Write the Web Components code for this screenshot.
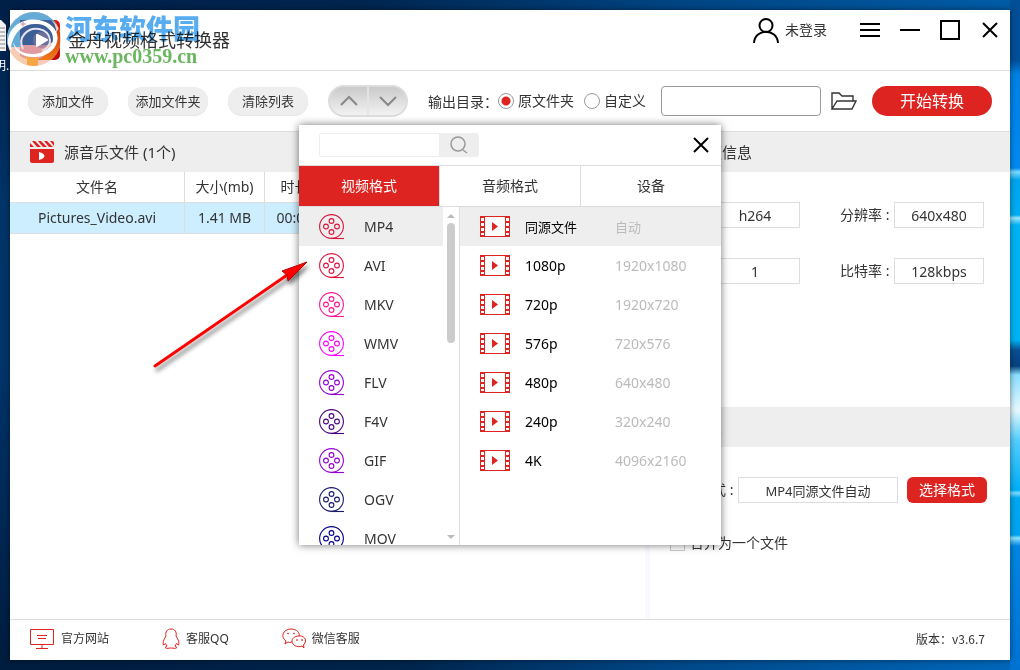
<!DOCTYPE html>
<html lang="zh-CN">
<head>
<meta charset="utf-8">
<title>金舟视频格式转换器</title>
<style>
html, body { margin: 0; height: 100%; }
body { font: 14px/20px "Noto Sans", "Noto Sans CJK SC", sans-serif; color: #333; overflow: hidden; }
</style>
</head>
<body>
<desk-top>
  <app-window>
    <title-bar heading="金舟视频格式转换器"></title-bar>
    <tool-bar></tool-bar>
    <file-list></file-list>
    <info-panel></info-panel>
    <app-footer></app-footer>
    <format-picker slot="popup"></format-picker>
  </app-window>
</desk-top>
<script>
const base = `<style>
:host,*{box-sizing:border-box}
button,input{font:inherit;color:inherit;margin:0;padding:0}
button{border:0;background:none;cursor:pointer}
a{color:inherit;text-decoration:none}
svg{display:block;flex:none}
</style>`;

function define(name, render) {
  customElements.define(name, class extends HTMLElement {
    connectedCallback() {
      if (this.shadowRoot) return;
      this.attachShadow({ mode: "open" }).innerHTML = base + render(this);
    }
  });
}

/* Desktop wallpaper, shortcut icon at the edge, and overlays above the window */
define("desk-top", () => `
<style>
:host{display:flex;position:relative;min-height:100%;padding:10px;overflow:hidden;
 background:
 linear-gradient(#004f97 0,#004f97 60px,#0081e5 74px,#008af0 168px,#7ddcff 172px,#00a5ee 180px,#00aef5 215px,#9be6ff 218px,#00b4f5 225px,#00b4f5 340px,#0a4f92 350px,#06417f 366px,#8bdfff 375px,#e6f9ff 410px,#55cfff 440px,#00aef7 490px,#7ddcff 493px,#00a8f2 498px,#00a4ef 535px,#8be4ff 538px,#0086e4 546px,#0072d2 100%) right/10px 100% no-repeat,
 linear-gradient(90deg,#012049,#00254f 35%,#004482 65%,#005da8) top/100% 10px no-repeat,
 linear-gradient(90deg,#001c3e,#00254d 40%,#004787 65%,#0068bd) bottom/100% 10px no-repeat,
 linear-gradient(#012049,#013468 30%,#00346a 55%,#001c3e) left/10px 100% no-repeat}
.shortcut{position:absolute;left:-6px;top:20px;color:#fff;font-size:12px;white-space:nowrap}
.shortcut svg{margin-left:6px}
.mark{position:absolute;left:65px;top:12px;pointer-events:none;mix-blend-mode:multiply}
.mark b{display:block}
.cn{font:900 27px/32px "Noto Sans CJK SC",sans-serif;color:#58adf0}
.url{font:bold 20px/24px "Liberation Serif",serif;color:#6bb75f}
.logo{position:absolute;left:7px;top:11px}
.arrow{position:absolute;left:140px;top:250px;pointer-events:none;filter:drop-shadow(2px 4px 2px rgba(0,0,0,.5))}
</style>
<div class="shortcut"><svg width="10" height="36" viewBox="0 0 10 36"><path d="M0 0V31H6V5L1 0Z" fill="#f4f4f4"/><path d="M0 8H5M0 12H5M0 16H5M0 20H5M0 24H5M0 28H5" stroke="#888"/></svg>明.</div>
<slot></slot>
<svg class="logo" width="54" height="56" viewBox="0 0 54 56">
 <defs><linearGradient id="o" x1="0" y1="0" x2="1" y2="1"><stop offset="0" stop-color="#ef4a25"/><stop offset=".5" stop-color="#d81a10"/><stop offset="1" stop-color="#b80707"/></linearGradient>
 <linearGradient id="g" x1="0" y1="0" x2="0" y2="1"><stop offset="0" stop-color="#c8380a"/><stop offset="1" stop-color="#f07818"/></linearGradient>
 <clipPath id="c"><circle cx="27" cy="28" r="27"/></clipPath></defs>
 <rect x="13" y="9" width="40" height="40" rx="5" fill="url(#o)"/>
 <g clip-path="url(#c)">
 <path d="M0 0H54V56H0Z" fill="#f6c9bd"/>
 <path d="M0 0H50V14Q46 9 36 9H13V36H0Z" fill="#66abd6"/>
 <path d="M13 9H44Q52 16 48 30L40 34H13Z" fill="#3c5f97"/>
 <path d="M13 34H44V49H13Z" fill="#e19aa0"/>
 <path d="M53 15V42L43 49H30Q46 42 48 24Z" fill="url(#g)"/>
 <path d="M18 45Q26 48 31 46V56H20Z" fill="#f8a645"/>
 <path d="M0 40L8 39Q13 47 20 48V56H0Z" fill="#f7cdb0"/>
 </g>
 <path d="M1 34C-1 15 18 6 32 9C44 11 53 20 50 31C48 40 37 47 26 46C14 46 7 39 6 31C9 39 16 43 25 43C38 43 46 35 46 28C46 19 38 13 30 13C18 12 9 20 6 29Q3 35 5 41Z" fill="#fff"/>
 <path d="M16 38C10 26 21 16 32 18Q42 20 43 29Q43 37 35 40" fill="none" stroke="#e8e4ee" stroke-width="2"/>
 <circle cx="34" cy="29" r="8" fill="#8a7a9e" opacity=".6"/>
 <path d="M30 24L40 29L30 35Z" fill="#fff" stroke="#fff" stroke-width="2" stroke-linejoin="round"/>
 <path d="M16 10l1 2 3 1-3 1-1 2-1-2-2-1 2-1Z" fill="#d6a9b9"/>
</svg>
<div class="mark"><b class="cn">河东软件园</b><b class="url">www.pc0359.cn</b></div>
<svg class="arrow" width="175" height="125" viewBox="0 0 175 125"><path d="M15 116L150 23" stroke="#f00" stroke-width="3" stroke-linecap="round"/><path d="M167 12L142 21L147 25L148 31Z" fill="#f00" stroke="#b00" stroke-width="1"/></svg>`);

define("app-window", () => `
<style>
:host{flex:1;display:grid;position:relative;grid-template:auto auto 1fr auto / 1fr 365px;background:#fff;box-shadow:0 0 6px rgba(0,0,0,.5)}
::slotted(title-bar),::slotted(tool-bar),::slotted(app-footer){grid-column:1/3}
</style><slot></slot><slot name="popup"></slot>`);

define("title-bar", el => `
<style>
:host{display:flex;align-items:center;height:61px;border-bottom:1px solid #ddd;padding:0 9px 0 58px}
h1{font-size:18px;line-height:28px;font-weight:400;margin:0;flex:1}
.user{display:flex;align-items:center;gap:6px;margin:0 32px 20px 0}
.ctl{display:flex;gap:18px;margin-bottom:20px}
</style>
<h1>${el.getAttribute("heading")}</h1>
<button class="user"><svg width="26" height="25" viewBox="0 0 26 25" fill="none" stroke="#000" stroke-width="2"><circle cx="13" cy="7.500" r="6.500"/><path d="M1 25C2 10 24 10 25 25"/></svg>未登录</button>
<div class="ctl">
<button aria-label="菜单"><svg width="22" height="20" fill="none" stroke="#000" stroke-width="2"><path d="M1 4H21M1 10H21M1 16H21"/></svg></button>
<button aria-label="最小化"><svg width="22" height="20" stroke="#000" stroke-width="2"><path d="M1 10H21"/></svg></button>
<button aria-label="最大化"><svg width="22" height="20" fill="none" stroke="#000" stroke-width="2"><path d="M2 1H20V19H2Z"/></svg></button>
<button aria-label="关闭"><svg width="22" height="20" fill="none" stroke="#000" stroke-width="2"><path d="M4 3L18 17M18 3L4 17"/></svg></button>
</div>`);

define("tool-bar", () => `
<style>
:host{display:flex;align-items:center;height:61px;border-bottom:1px solid #ddd;padding:0 18px;white-space:nowrap}
.pill{width:80px;height:28px;border-radius:14px;background:#eee;font-size:13px;margin-right:20px;box-shadow:0 1px 1px #e4e4e4}
.move{display:flex;width:80px;height:32px;border:2px solid #ddd;border-radius:16px;background:linear-gradient(#cacaca,#f2f2f2);margin-right:20px}
.move button{flex:1;display:grid;place-items:center}
.move button+button{border-left:2px solid #e4e4e4}
.cap{font-family:"Noto Sans CJK TC",sans-serif}
label{display:flex;align-items:center;gap:4px;margin-right:10px}
input[type=radio]{appearance:none;width:16px;height:16px;border:1px solid #999;border-radius:50%;background:#fff}
input:checked{background:radial-gradient(#dd2420 0 4px,#fff 5px)!important}
.path{flex:1;min-width:80px;height:30px;border:1px solid #999;border-radius:4px;background:#fff;margin:0 10px 0 5px}
.go{width:120px;height:30px;border-radius:15px;background:#dd2420;color:#fff;font-size:16px;margin-left:15px}
</style>
<button class="pill">添加文件</button><button class="pill">添加文件夹</button><button class="pill">清除列表</button>
<div class="move"><button aria-label="上移"><svg width="18" height="12" fill="none" stroke="#888" stroke-width="2"><path d="M1 10L9 2L17 10"/></svg></button><button aria-label="下移"><svg width="18" height="12" fill="none" stroke="#888" stroke-width="2"><path d="M1 2L9 10L17 2"/></svg></button></div>
<span class="cap">输出目录：</span>
<label><input type="radio" name="dir" checked>原文件夹</label>
<label><input type="radio" name="dir">自定义</label>
<input class="path" type="text" aria-label="输出目录">
<button aria-label="浏览"><svg width="26" height="18" viewBox="0 0 26 18" fill="none" stroke="#333" stroke-width="1.400"><path d="M1 17V1H8L11 4H22V9M1 17L6 9H25L21 17Z"/></svg></button>
<button class="go">开始转换</button>`);

define("section-head", () => `
<style>:host{display:flex;align-items:center;height:40px;background:#eee;padding-left:20px;gap:var(--gap,10px)}
:host([inset]){padding-left:10px;--gap:8px}
h2{margin:0;font-size:15px;line-height:20px;font-weight:400}</style>
<svg width="24" height="22" viewBox="0 0 24 22"><path d="M0 8H24V20Q24 22 22 22H2Q0 22 0 20Z" fill="#dd2420"/><path d="M0 6V2L4 6ZM2 0H5L11 6H7ZM8 0H11L17 6H13ZM14 0H17L23 6H19ZM20 0H22Q24 0 24 2V5Z" fill="#dd2420"/><path d="M9 11L12 12Q17 15 12 18L9 19Z" fill="#fff"/></svg>
<h2><slot></slot></h2>`);

define("file-list", () => `
<style>
:host{display:block}
table{border-collapse:separate;border-spacing:0;table-layout:fixed;width:100%}
th,td{height:31px;padding:0;font-weight:400;text-align:center;border-bottom:1px solid #ddd;border-right:1px solid #ddd}
td{background:#cef}
th:last-child,td:last-child{border-right:0}
.name{width:175px}.size{width:80px}.time{width:60px}
</style>
<section-head>源音乐文件 (1个)</section-head>
<table><thead><tr><th class="name">文件名</th><th class="size">大小(mb)</th><th class="time">时长</th><th></th></tr></thead>
<tbody><tr><td>Pictures_Video.avi</td><td>1.41 MB</td><td>00:00</td><td></td></tr></tbody></table>`);

define("info-panel", () => `
<style>
:host{display:block;border-left:5px solid #f8faff}
.info{display:grid;gap:30px;padding:30px 26px 0 20px;height:235px;align-content:start}
.row{display:flex;justify-content:flex-end;align-items:center;gap:40px}
label{display:flex;align-items:center;white-space:nowrap}
span{width:54px}
label:first-child span{width:40px}
input[type=text]{width:90px;height:26px;border:1px solid #ddd;text-align:center;background:#fff}
.out{display:flex;align-items:center;padding:30px 23px 0 20px;gap:9px}
.out label{flex:1}
.out label span{width:68px}
.out input[type=text]{flex:1;min-width:0;font-size:13px}
button{width:80px;height:26px;border-radius:6px;background:#dd2420;color:#fff}
.merge{margin:30px 20px;gap:5px}
input[type=checkbox]{appearance:none;width:15px;height:15px;border:1px solid #ccc;background:#fff}
</style>
<section-head inset>视频信息</section-head>
<div class="info">
<div class="row"><label><span>编码:</span><input type="text" readonly value="h264"></label><label><span>分辨率 :</span><input type="text" readonly value="640x480"></label></div>
<div class="row"><label><span>声道:</span><input type="text" readonly value="1"></label><label><span>比特率 :</span><input type="text" readonly value="128kbps"></label></div>
</div>
<section-head inset>设置</section-head>
<div class="out"><label><span>输出格式 :</span><input type="text" readonly value="MP4同源文件自动"></label><button>选择格式</button></div>
<label class="merge"><input type="checkbox">合并为一个文件</label>`);

define("app-footer", () => `
<style>
:host{display:flex;align-items:center;height:41px;border-top:1px solid #ddd;padding:0 25px 3px 19px;font-size:12px}
a{display:flex;align-items:center;gap:6px;margin-right:53px}
svg{fill:none;stroke:#dd2420}
span{margin-left:auto;font-family:"Noto Sans CJK TC",sans-serif}
</style>
<a href="#site"><svg width="26" height="22" viewBox="0 0 26 22"><path d="M1.500 1.500H24.500V16.500H1.500ZM8 7.500H18M9 10.500H17M13 17V20M7 20.500H19"/></svg>官方网站</a>
<a href="#qq"><svg width="18" height="22" viewBox="0 0 18 22"><path d="M4 8C3 4 5 1 9 1S15 4 14 8Q18 14 16.500 17L14.500 15.500L13 18L15 19.500Q14 21 9.500 20H8.500Q4 21 3 19.500L5 18L3.500 15.500L1.500 17Q0 14 4 8Z"/></svg>客服QQ</a>
<a href="#wechat"><svg width="24" height="22" viewBox="0 0 24 22"><path d="M10 14Q7 15 6 14L3 16L4 13C-2 9 1 1 9 1C15 1 18 5 17 8M17 8C12 8 10 11 10 13C10 17 15 20 20 18L22 20L21.500 17C27 11 20 7 17 8Z"/><circle cx="6" cy="5.500" r=".5"/><circle cx="12" cy="5.500" r=".5"/><circle cx="15" cy="12" r=".5"/><circle cx="20" cy="12" r=".5"/></svg>微信客服</a>
<span>版本：v3.6.7</span>`);

const formats = [["MP4", "#dc143c"], ["AVI", "#dc143c"], ["MKV", "#ff1493"], ["WMV", "#ff00ff"], ["FLV", "#9400d3"], ["F4V", "#4b0082"], ["GIF", "#9400d3"], ["OGV", "#191970"], ["MOV", "#00008b"]];
const sizes = [["同源文件", "自动"], ["1080p", "1920x1080"], ["720p", "1920x720"], ["576p", "720x576"], ["480p", "640x480"], ["240p", "320x240"], ["4K", "4096x2160"]];

define("format-item", el => `
<style>:host{display:block}
button{display:flex;align-items:center;width:100%;height:39px;padding-left:20px;gap:20px;text-align:left}
:host([selected]) button{background:#eee}
svg{fill:none;stroke:${el.getAttribute("color")};stroke-width:1.100}</style>
<button><svg width="25" height="26" viewBox="0 0 25 26"><circle cx="12.500" cy="12.500" r="11.900"/><circle cx="12.500" cy="7" r="2.400"/><circle cx="7" cy="12.500" r="2.400"/><circle cx="18" cy="12.500" r="2.400"/><circle cx="12.500" cy="18" r="2.400"/><path d="M12 24.500H25"/></svg><slot></slot></button>`);

define("size-item", el => `
<style>:host{display:block}
button{display:flex;align-items:center;width:100%;height:39px;padding-left:20px;text-align:left;color:#000}
:host([selected]) button{background:#eee;font-size:13px}
.n{padding-left:15px;flex:1 0 105px}
.d{flex:1 0 106px;color:#bbb}</style>
<button><svg width="30" height="21" viewBox="0 0 30 21"><path d="M0 0H30V21H0Z" fill="#dd2420"/><path d="M5 1H25V20H5ZM1 2H4V5H1ZM1 7H4V10H1ZM1 12H4V15H1ZM1 17H4V19H1ZM26 2H29V5H26ZM26 7H29V10H26ZM26 12H29V15H26ZM26 17H29V19H26Z" fill="#fff"/><path d="M12 6L18 10.500L12 15Z" fill="#dd2420"/></svg><span class="n"><slot></slot></span><span class="d">${el.getAttribute("detail")}</span></button>`);

define("format-picker", () => `
<style>
:host{display:flex;flex-direction:column;position:absolute;left:289px;top:115px;width:422px;height:420px;background:#fff;box-shadow:0 0 8px rgba(0,0,0,.55);overflow:hidden}
header{display:flex;align-items:center;justify-content:space-between;height:41px;flex:none;border-bottom:1px solid #ddd;padding:0 12px 0 20px}
.search{display:flex;height:24px;width:160px;border-radius:3px;overflow:hidden}
.search input{flex:1;min-width:0;border:1px solid #eee;border-right:0;background:#fff}
.search button{width:40px;background:#eee;display:grid;place-items:center}
nav{display:flex;flex:none;height:41px;border-bottom:1px solid #ddd}
nav button{flex:1;border-right:1px solid #ddd}
nav button:last-child{border-right:0}
nav .on{background:#dd2420;color:#fff}
main{flex:1;min-height:0;display:flex}
.left{width:161px;display:flex;border-right:1px solid #ddd}
.list{flex:1;overflow:hidden}
.bar{width:16px;display:flex;flex-direction:column;align-items:center;padding:6px 0 5px}
.thumb{width:8px;height:120px;border-radius:4px;background:#ccc;margin:5px 0 auto}
.right{flex:1}
</style>
<header><div class="search"><input type="text" aria-label="搜索"><button aria-label="搜索"><svg width="18" height="18" fill="none" stroke="#999" stroke-width="1.500"><circle cx="8" cy="8" r="7"/><path d="M13 14L17 17"/></svg></button></div>
<button aria-label="关闭"><svg width="16" height="16" fill="none" stroke="#000" stroke-width="2"><path d="M1 1L15 15M15 1L1 15"/></svg></button></header>
<nav><button class="on">视频格式</button><button>音频格式</button><button>设备</button></nav>
<main><div class="left"><div class="list">${formats.map(([n, c], i) => `<format-item color="${c}" ${i ? "" : "selected"}>${n}</format-item>`).join("")}</div>
<div class="bar"><svg width="8" height="5"><path d="M0 5L4 1L8 5Z" fill="#bbb"/></svg><div class="thumb"></div><svg width="8" height="5"><path d="M0 0L4 4L8 0Z" fill="#bbb"/></svg></div></div>
<div class="right">${sizes.map(([n, d], i) => `<size-item detail="${d}" ${i ? "" : "selected"}>${n}</size-item>`).join("")}</div></main>`);
</script>
</body>
</html>
